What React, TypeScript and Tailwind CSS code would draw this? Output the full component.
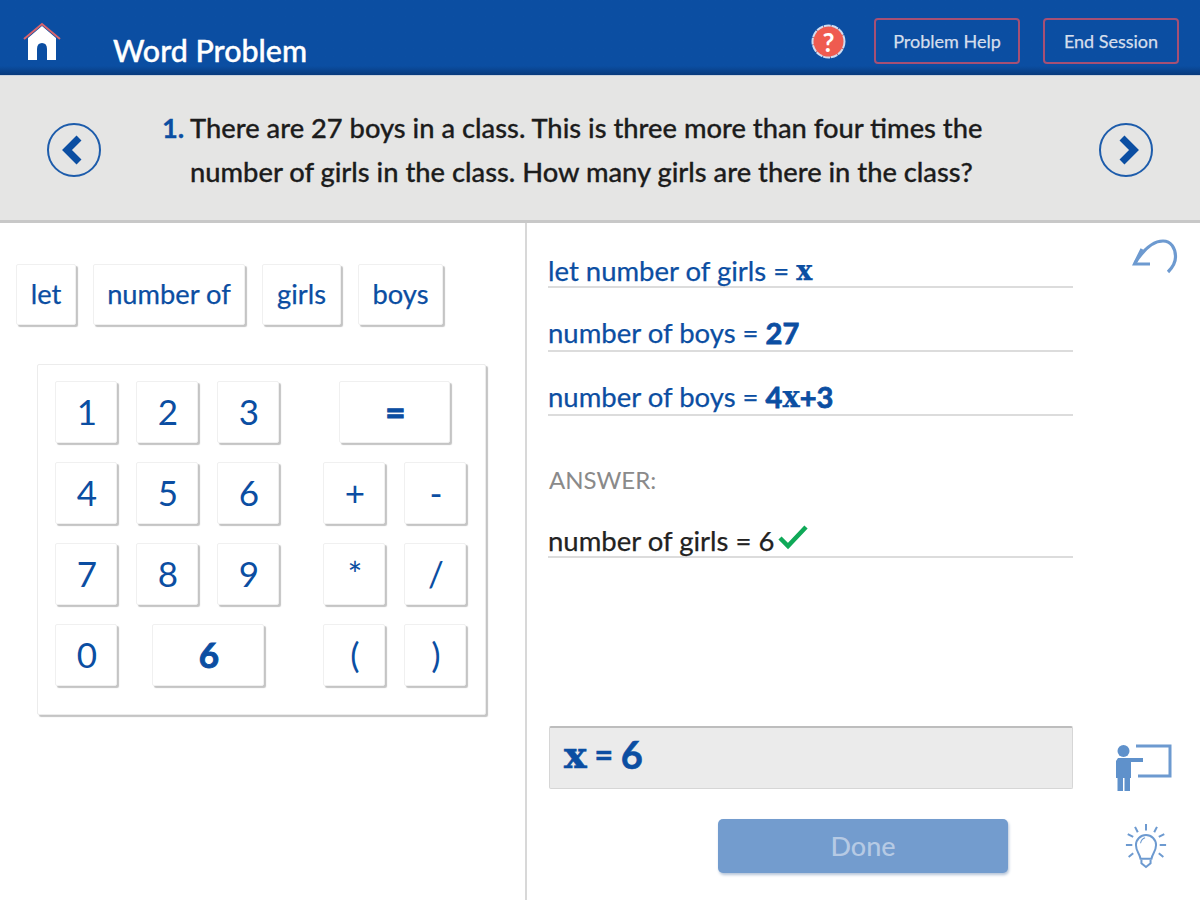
const lato = "font-['Lato','Liberation_Sans',sans-serif]";

function Key({ children, w = "w-[62px]", bold = false, cls = "" }: { children: React.ReactNode; w?: string; bold?: boolean; cls?: string }) {
  return (
    <div className={`${w} ${cls} h-[62px] shrink-0 flex items-center justify-center pl-[2px] pb-[2px] bg-white rounded-[2px] border border-[#f0f0f0] shadow-[2px_2px_1px_#c4c4c4] text-[#0b4ea2] text-[35px] ${bold ? "font-bold [-webkit-text-stroke:1px_#0b4ea2]" : ""}`}>
      {children}
    </div>
  );
}

function Token({ children, w }: { children: React.ReactNode; w: string }) {
  return (
    <div className={`${w} h-[61px] flex items-center justify-center bg-white rounded-[2px] border border-[#f0f0f0] shadow-[2px_2px_1px_#c4c4c4] text-[#0b4ea2] text-[27.3px] [-webkit-text-stroke:0.25px]`}>
      {children}
    </div>
  );
}

function Line({ children, cls = "text-[#0b4ea2]", mb = "mb-[26px]", lead = "leading-[34px]" }: { children: React.ReactNode; cls?: string; mb?: string; lead?: string }) {
  return (
    <div className={`w-[525px] h-[38px] flex items-end ${lead} text-[27.5px] [-webkit-text-stroke:0.25px] border-b-2 border-[#dcdcdc] whitespace-pre ${cls} ${mb}`}>
      {children}
    </div>
  );
}

function Slab({ children, size = "text-[27px]" }: { children: React.ReactNode; size?: string }) {
  return <span className={`font-['DejaVu_Serif',serif] font-bold ${size}`}>{children}</span>;
}
function Wide({ children }: { children: React.ReactNode }) {
  return <span className="font-bold text-[29px] [-webkit-text-stroke:0.8px]">{children}</span>;
}

function Circle({ dir }: { dir: "l" | "r" }) {
  return (
    <svg width="56" height="56" viewBox="0 0 56 56" className="shrink-0 mt-[4px]">
      <circle cx="28" cy="28" r="26" fill="none" stroke="#1d5cab" strokeWidth="2" />
      <path d={dir === "l" ? "M33 16 L21 28 L33 40" : "M24 16 L36 28 L24 40"} fill="none" stroke="#0b4ea2" strokeWidth="7" />
    </svg>
  );
}

export default function App() {
  return (
    <div className={`w-[1200px] h-[900px] bg-white overflow-hidden flex flex-col ${lato}`}>
      <header className="h-[75px] shrink-0 bg-[#0b4ea2] bg-gradient-to-b from-[#0b4ea2] from-[88%] to-[#083a7c] flex items-start text-white">
        <svg width="38" height="40" viewBox="0 0 38 40" className="ml-[23px] mt-[22px] shrink-0">
          <path d="M5 16 L19 4 L33 16 V38 H24 V27 Q24 21 19 21 Q14 21 14 27 V38 H5 Z" fill="#fff" />
          <path d="M1 17 L19 2 L37 17" fill="none" stroke="#d9636b" strokeWidth="2" />
        </svg>
        <div className="ml-[52px] mt-[32px] text-[30.4px] leading-[36px] font-medium [-webkit-text-stroke:0.4px]">Word Problem</div>
        <div className="ml-auto mt-[24px] w-[35px] h-[35px] relative flex items-center justify-center text-[26px] font-bold leading-none">
          <svg width="35" height="35" viewBox="0 0 35 35" className="absolute inset-0">
            <circle cx="17.5" cy="17.5" r="16" fill="#ef5b50" stroke="#cfdcf0" strokeWidth="2" strokeDasharray="7 0.8" />
          </svg>
          <span className="relative">?</span>
        </div>
        <div className="ml-[28px] mt-[18px] w-[146px] h-[46px] rounded-[4px] border-2 border-[#a65074] flex items-center justify-center text-[18px] text-[#d5deec] [-webkit-text-stroke:0.25px]">Problem Help</div>
        <div className="ml-[23px] mr-[21px] mt-[18px] w-[136px] h-[46px] rounded-[4px] border-2 border-[#a65074] flex items-center justify-center text-[18px] text-[#d5deec] [-webkit-text-stroke:0.25px]">End Session</div>
      </header>

      <section className="h-[148px] shrink-0 bg-[#e5e5e4] border-t border-[#c9d2de] border-b-[3px] border-b-[#c8c8c8] flex items-center justify-between pl-[46px] pr-[46px]">
        <Circle dir="l" />
        <div className="flex-1 flex text-[27.3px] leading-[44px] font-medium text-[#1c1c1c] pl-[60px] pt-[4px] [-webkit-text-stroke:0.3px]">
          <span className="text-[#0b4ea2] font-bold w-[28px] shrink-0">1.</span>
          <div className="whitespace-nowrap">
            <div>There are 27 boys in a class. This is three more than four times the</div>
            <div>number of girls in the class. How many girls are there in the class?</div>
          </div>
        </div>
        <Circle dir="r" />
      </section>

      <main className="flex-1 flex min-h-0">
        <div className="w-[527px] shrink-0 border-r-2 border-[#d8d8d8] pl-[16px] pt-[41px]">
          <div className="flex gap-[17px]">
            <Token w="w-[60px]">let</Token>
            <Token w="w-[152px]">number of</Token>
            <Token w="w-[79px]">girls</Token>
            <Token w="w-[85px]">boys</Token>
          </div>
          <div className="ml-[21px] mt-[39px] w-[449px] h-[351px] bg-white border border-[#ececec] rounded-[2px] shadow-[2px_2px_1px_#c4c4c4] pl-[17px] pt-[16px] flex flex-col gap-[19px]">
            <div className="flex">
              <div className="flex gap-[19px] w-[284px]"><Key>1</Key><Key>2</Key><Key>3</Key></div>
              <Key w="w-[111px]" bold>=</Key>
            </div>
            <div className="flex">
              <div className="flex gap-[19px] w-[268px]"><Key>4</Key><Key>5</Key><Key>6</Key></div>
              <div className="flex gap-[19px]"><Key>+</Key><Key>-</Key></div>
            </div>
            <div className="flex">
              <div className="flex gap-[19px] w-[268px]"><Key>7</Key><Key>8</Key><Key>9</Key></div>
              <div className="flex gap-[19px]"><Key>*</Key><Key>/</Key></div>
            </div>
            <div className="flex">
              <div className="flex gap-[35px] w-[268px]"><Key>0</Key><Key w="w-[112px]" bold>6</Key></div>
              <div className="flex gap-[19px]"><Key>(</Key><Key>)</Key></div>
            </div>
          </div>
        </div>

        <div className="w-[546px] shrink-0 pl-[21px] pt-[27px] flex flex-col">
          <Line lead="leading-[30px]">{"let number of girls = "}<Slab>x</Slab></Line>
          <Line>{"number of boys = "}<Wide>27</Wide></Line>
          <Line mb="mb-[49px]">{"number of boys = "}<Wide>4</Wide><Slab size="text-[29px]">x</Slab><Wide>+3</Wide></Line>
          <div className="text-[24px] leading-[30px] text-[#8a8a8a] mb-[25px] ml-[1px]">ANSWER:</div>
          <Line cls="text-[#222222]" mb="mb-0" lead="leading-[31px]">
            {"number of girls = 6"}
            <svg width="32" height="26" viewBox="0 0 32 26" className="ml-[3px] mb-[6px]">
              <path d="M3 14 L11 22 L29 3" fill="none" stroke="#0fa958" strokeWidth="4.5" />
            </svg>
          </Line>
          <div className="mt-[168px] ml-[1px] w-[524px] h-[63px] bg-[#ebebeb] rounded-[2px] border border-[#d6d6d6] border-t-2 border-t-[#bdbdbd] flex items-center pl-[14px] pb-[7px] text-[32px] text-[#0b4ea2] [-webkit-text-stroke:0.6px]">
            <Slab size="text-[38px]">x</Slab>
            <span className="font-bold">{"\u00a0=\u00a0"}</span>
            <span className="font-bold text-[38px]">6</span>
          </div>
          <div className="mt-[30px] ml-[170px] w-[290px] h-[54px] rounded-[5px] bg-[#739cce] shadow-[1px_2px_3px_#b5c4d8] flex items-center justify-center text-[27px] font-medium text-[#b6cae4]">Done</div>
        </div>

        <div className="flex-1 flex flex-col items-start pt-[15px]">
          <svg width="48" height="36" viewBox="0 0 48 36" className="ml-[59px]">
            <path d="M10 11 L2.5 26 L18 26" fill="none" stroke="#6d9ad0" strokeWidth="3.2" />
            <path d="M3 25 C10 14 20 3 31 3 C39 3 43.5 10 43.5 19 C43.5 25 40 30 36 34" fill="none" stroke="#6d9ad0" strokeWidth="3.2" />
          </svg>
          <svg width="58" height="48" viewBox="0 0 58 48" className="ml-[41px] mt-[470px]">
            <circle cx="9.5" cy="7" r="6" fill="#5f91cb" />
            <path d="M4 14 H15 L29 14 V18 H17 V34 H16 V47 H10.5 V34 H9 V47 H3.5 V34 H2 V17 Z" fill="#5f91cb" />
            <path d="M22 2 H56 V32 H24" fill="none" stroke="#6d9ad0" strokeWidth="3" />
          </svg>
          <svg width="42" height="46" viewBox="0 0 46 50" className="ml-[52px] mt-[31px]">
            <g stroke="#6d9ad0" strokeWidth="2.2" fill="none">
              <path d="M23 1 V8 M11 4 L14 10 M35 4 L32 10 M3 12 L9 15 M43 12 L37 15 M1 24 H8 M38 24 H45 M4 37 L9 33 M42 37 L37 33" />
              <path d="M17 39 C16 33 12 31 12 24 A11 11 0 0 1 34 24 C34 31 30 33 29 39 Z" />
              <path d="M18 40 V44 L23 48 L28 44 V40" />
              <path d="M17 22 Q18 17 22 16" strokeWidth="1.2" />
            </g>
          </svg>
        </div>
      </main>
    </div>
  );
}
